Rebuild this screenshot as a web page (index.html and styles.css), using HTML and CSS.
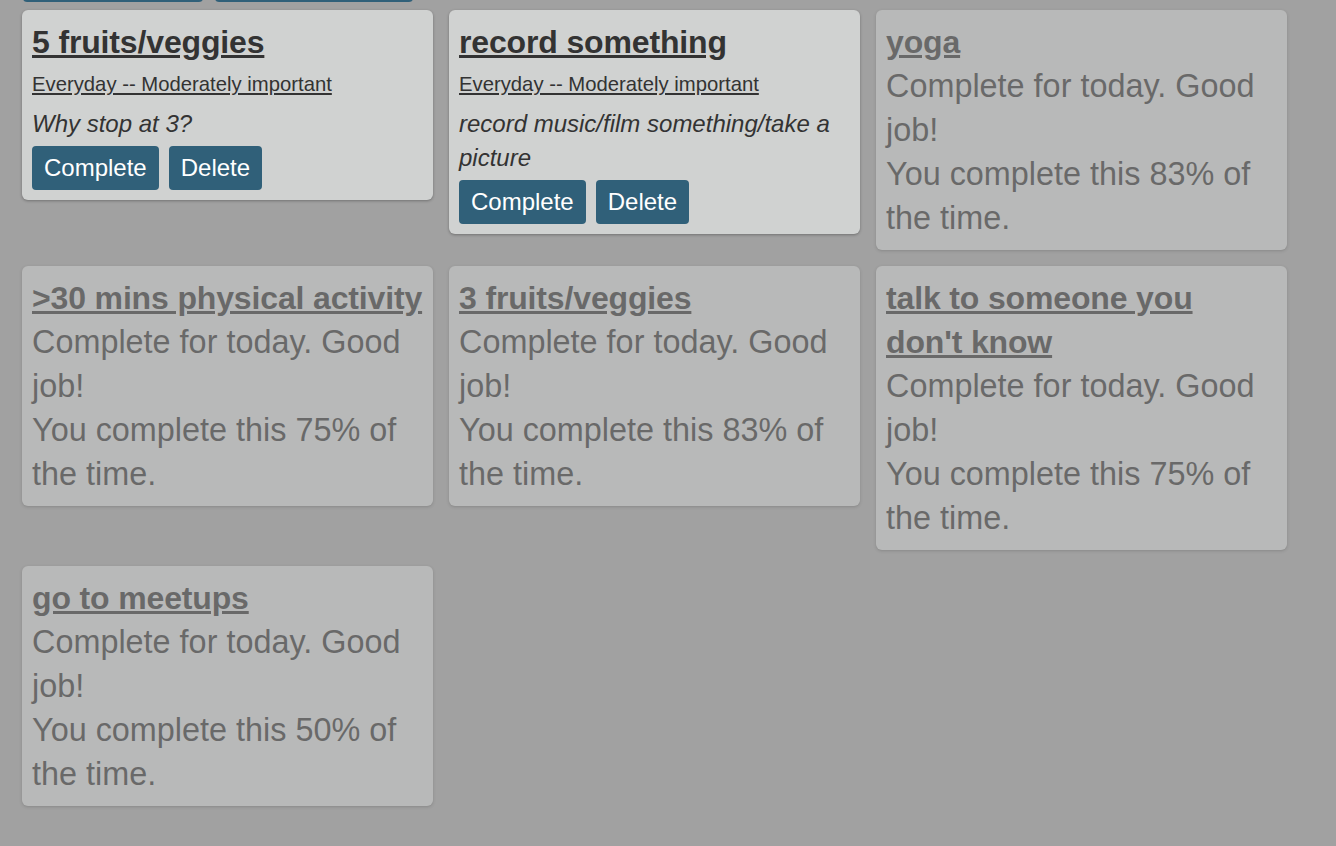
FILE: index.html
```html
<!DOCTYPE html>
<html lang="en">
<head>
<meta charset="utf-8">
<title>Habits</title>
<link rel="stylesheet" href="styles.css">
</head>
<body>
<div class="toolbar">
  <span class="tool-btn tool-btn-a"></span>
  <span class="tool-btn tool-btn-b"></span>
</div>
<div class="cards">
  <div class="card">
    <a class="card-title" href="#">5 fruits/veggies</a>
    <div class="card-meta"><a href="#">Everyday -- Moderately important</a></div>
    <div class="card-desc">Why stop at 3?</div>
    <div class="card-actions">
      <button class="btn">Complete</button>
      <button class="btn">Delete</button>
    </div>
  </div>
  <div class="card">
    <a class="card-title" href="#">record something</a>
    <div class="card-meta"><a href="#">Everyday -- Moderately important</a></div>
    <div class="card-desc">record music/film something/take a picture</div>
    <div class="card-actions">
      <button class="btn">Complete</button>
      <button class="btn">Delete</button>
    </div>
  </div>
  <div class="card card-done">
    <a class="card-title" href="#">yoga</a>
    <div class="card-status">Complete for today. Good job!</div>
    <div class="card-status">You complete this 83% of the time.</div>
  </div>
  <div class="card card-done">
    <a class="card-title" href="#">&gt;30 mins physical activity</a>
    <div class="card-status">Complete for today. Good job!</div>
    <div class="card-status">You complete this 75% of the time.</div>
  </div>
  <div class="card card-done">
    <a class="card-title" href="#">3 fruits/veggies</a>
    <div class="card-status">Complete for today. Good job!</div>
    <div class="card-status">You complete this 83% of the time.</div>
  </div>
  <div class="card card-done">
    <a class="card-title" href="#">talk to someone you don't know</a>
    <div class="card-status">Complete for today. Good job!</div>
    <div class="card-status">You complete this 75% of the time.</div>
  </div>
  <div class="card card-done">
    <a class="card-title" href="#">go to meetups</a>
    <div class="card-status">Complete for today. Good job!</div>
    <div class="card-status">You complete this 50% of the time.</div>
  </div>
</div>
</body>
</html>
```

FILE: styles.css
```css
html, body {
  margin: 0;
  padding: 0;
}

body {
  background: #a1a1a1;
  font-family: "Liberation Sans", Arial, Helvetica, sans-serif;
  color: #333333;
  overflow: hidden;
}

.toolbar {
  display: flex;
  gap: 12px;
  padding: 0 23px;
  margin-top: -42px;
  height: 44px;
}

.tool-btn {
  display: block;
  height: 44px;
  background: #306079;
  border-radius: 4px;
}

.tool-btn-a { width: 180px; }
.tool-btn-b { width: 198px; }

.cards {
  display: flex;
  flex-wrap: wrap;
  align-items: flex-start;
  gap: 16px;
  padding: 8px 22px;
  width: 1265px;
}

.card {
  width: 411px;
  box-sizing: border-box;
  padding: 10px;
  background: #d0d2d1;
  border-radius: 6px;
  box-shadow: 0 1px 3px rgba(0, 0, 0, 0.3);
}

.card-done {
  opacity: 0.5;
}

.card-title {
  display: block;
  font-size: 32px;
  font-weight: bold;
  letter-spacing: -0.15px;
  line-height: 44px;
  color: #333333;
  text-decoration: underline;
}

.card-meta {
  margin: 6px 0 8px;
  font-size: 20.3px;
  line-height: 29px;
}

.card-meta a {
  color: #333333;
  text-decoration: underline;
}

.card-desc {
  font-size: 24px;
  font-style: italic;
  line-height: 34px;
}

.card-status {
  font-size: 32.4px;
  line-height: 44px;
}

.card-actions {
  display: flex;
  gap: 10px;
  margin-top: 5px;
}

.btn {
  height: 44px;
  padding: 0 12px;
  border: none;
  border-radius: 4px;
  background: #306079;
  color: #ffffff;
  font-family: "Liberation Sans", Arial, Helvetica, sans-serif;
  font-size: 24px;
  line-height: 44px;
}
```
